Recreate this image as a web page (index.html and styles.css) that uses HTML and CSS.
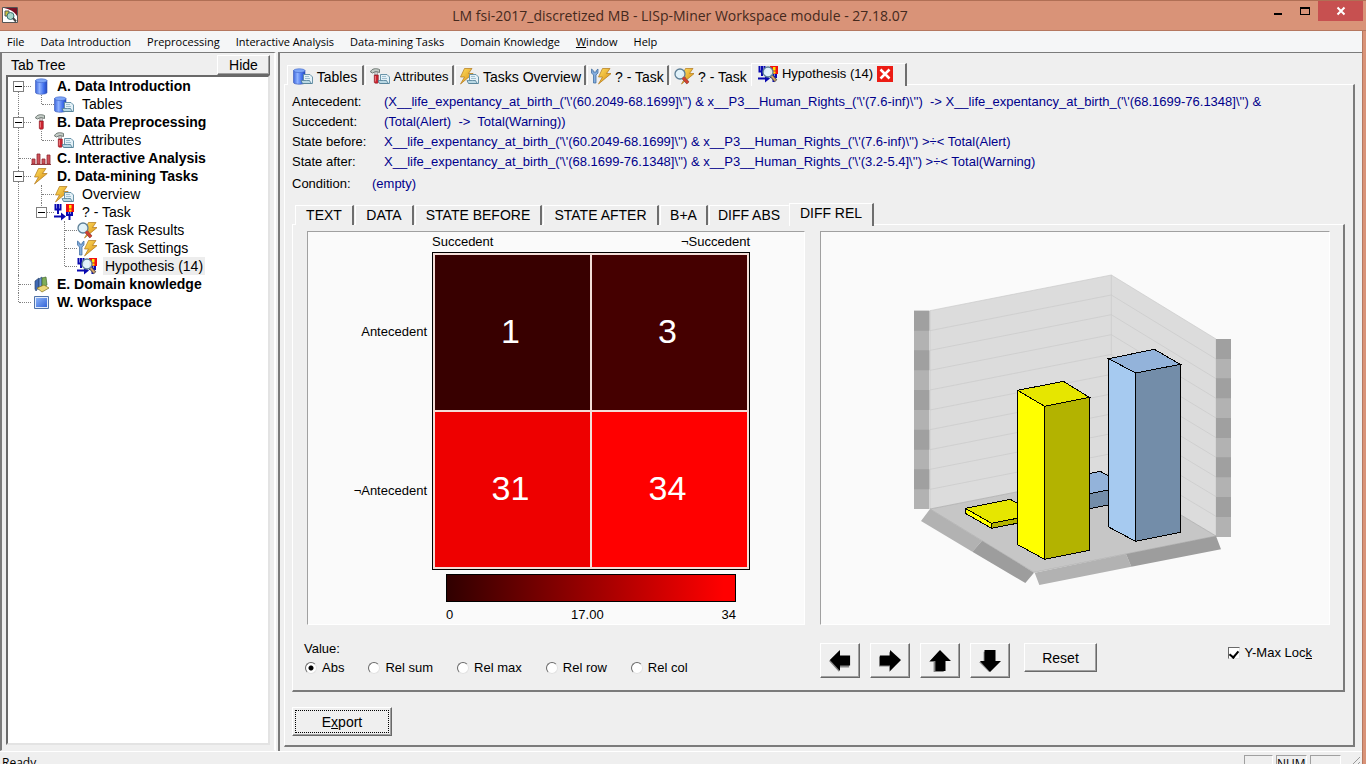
FILE: index.html
```html
<!DOCTYPE html>
<html lang="en">
<head>
<meta charset="utf-8">
<title>LM fsi-2017_discretized MB - LISp-Miner Workspace module - 27.18.07</title>
<link rel="stylesheet" href="styles.css">
</head>
<body>
<svg class="defs" aria-hidden="true">
  <defs>
    <linearGradient id="blue"><stop offset="0" stop-color="#3d66dd"/><stop offset=".35" stop-color="#8fb2ff"/><stop offset=".7" stop-color="#4472ee"/><stop offset="1" stop-color="#2348bd"/></linearGradient>
    <linearGradient id="screen" x2="1" y2="1"><stop offset="0" stop-color="#8ab2f8"/><stop offset="1" stop-color="#3566d8"/></linearGradient>
    <linearGradient id="gold" x2="1" y2="1"><stop offset="0" stop-color="#ffe060"/><stop offset="1" stop-color="#d5870c"/></linearGradient>
    <g id="g-db"><path d="M.5 2.500v12c0 2.300 11.500 2.300 11.500 0v-12z" fill="url(#blue)" stroke="#3556b5" stroke-width=".6"/><ellipse cx="6.300" cy="2.700" rx="5.700" ry="1.900" fill="#7ea6f7" stroke="#3a62c8" stroke-width=".6"/></g>
    <g id="g-sheet"><path d="M10.500 6.500h6.500l2.500 2.500v6.500h-9z" fill="#e4f1f8" stroke="#5c8aa0" stroke-width=".9"/><path d="M8 12.500c0 0 8 0 8.500 0 .5 1 1 2 2 3H9.500z" fill="#b9d8e4" stroke="#4a7890" stroke-width=".8"/><path d="M12 8.500h4M12 10.500h5" stroke="#8db3c4" stroke-width=".8"/></g>
    <g id="g-hammer"><path d="M.5 4C1.500.5 6 0 9.500 1.500V4.500L7 3.800H5L2.500 5z" fill="#c5cdc8" stroke="#56625c" stroke-width=".8"/><path d="M4.800 4h2.600v3H4.800z" fill="#ddd" stroke="#666" stroke-width=".5"/><path d="M4.300 7h4v7.500c0 1-4 1-4 0z" fill="#cc2430" stroke="#861520" stroke-width=".6"/><path d="M5.500 8v5.500" stroke="#f08a8a" stroke-width=".8"/></g>
    <g id="g-bolt"><path d="M5.500.500H13L9.500 5.500h4.700L1.500 16 5.500 9H1.500z" fill="url(#gold)" stroke="#b07718" stroke-width=".7"/></g>
    <g id="g-lens"><path d="m9 9.500 5 5.500" stroke="#555" stroke-width="3.400"/><path d="m9.500 10 4 4.500" stroke="#e0a468" stroke-width="1.800"/><circle cx="6" cy="6" r="5" fill="#dff1fa" fill-opacity=".95" stroke="#5d7f96" stroke-width="1.300"/></g>
    <g id="g-task"><path d="M1.500 0v5.500h5V0M4 0v10M13 7v4h5V7M15.500 7v9M0 12.500h9" fill="none" stroke="#0808b0" stroke-width="2"/><path d="m7 8.500 5 4-5 4z" fill="#0808b0"/><path d="M12 0h8v8h-8z" fill="#f01010"/><path d="M15 1h2.500v3.500H15zM15 5.500h2.500v2H15z" fill="#ffe800"/></g>
    <symbol id="db" viewBox="0 0 20 17"><use href="#g-db" x="4"/></symbol>
    <symbol id="tables" viewBox="0 0 20 17"><use href="#g-db"/><use href="#g-sheet"/></symbol>
    <symbol id="hammer" viewBox="0 0 20 17"><use href="#g-hammer" x="4"/></symbol>
    <symbol id="attributes" viewBox="0 0 20 17"><use href="#g-hammer"/><use href="#g-sheet"/></symbol>
    <symbol id="bars" viewBox="0 0 20 17"><path d="M1 9h3v5H1zM6 4h3v10H6zM11 9h3v5h-3zM16 5h3v9h-3z" fill="#d0525a" stroke="#8e2830" stroke-width=".8"/><path d="M0 14.500h20" stroke="#8e3a40"/></symbol>
    <symbol id="bolt" viewBox="0 0 20 17"><use href="#g-bolt" x="2"/></symbol>
    <symbol id="overview" viewBox="0 0 20 17"><use href="#g-bolt"/><use href="#g-sheet"/></symbol>
    <symbol id="task" viewBox="0 0 20 17"><use href="#g-task"/></symbol>
    <symbol id="results" viewBox="0 0 20 17"><use href="#g-bolt" x="6"/><use href="#g-lens"/><path d="m9 9.500 5 5.500" stroke="#d04030" stroke-width="3"/></symbol>
    <symbol id="settings" viewBox="0 0 20 17"><path d="M.5 1v4l2 2v8H5V7l2-2V1L5.300 2.500v1.500H2.300V2.500z" fill="#86aede" stroke="#34659c" stroke-width=".7"/><use href="#g-bolt" x="6"/></symbol>
    <symbol id="hypothesis" viewBox="0 0 20 17"><use href="#g-task"/><use href="#g-lens" x="4"/></symbol>
    <symbol id="domain" viewBox="0 0 20 17"><path d="M4 5 8 2v9l-3 4-1-2z" fill="#3f68b4" stroke="#2c4870" stroke-width=".7"/><path d="m8 3 3-2v9l-3 4z" fill="#6b96d8" stroke="#2c4870" stroke-width=".7"/><path d="m11 2 4-1 1 8-5 3z" fill="#7fae58" stroke="#44682c" stroke-width=".7"/><path d="m6 12 7-3 5 3-7 4z" fill="#ecd878" stroke="#80701c" stroke-width=".7"/></symbol>
    <symbol id="workspace" viewBox="0 0 20 17"><path d="M3.500 2.500h14v12h-14z" fill="#e4edfb" stroke="#5274a8"/><path d="M5 4h11v9H5z" fill="url(#screen)"/></symbol>
  </defs>
</svg>

<div class="window">
  <header class="titlebar">
    <svg class="app-icon" viewBox="0 0 16 16"><path fill="#fff" stroke="#555" d="M.5.500h15v15H.5z"/><path d="M2 1h13v8C12 4 7 2 2 1z" fill="#7a1024"/><path d="M3 4h4v5H3z" fill="#c9c440" stroke="#555"/><circle cx="8.500" cy="9" r="3.500" fill="#a7d6c9" stroke="#376f70"/><path d="m11 11 3 3.500" stroke="#444" stroke-width="2"/></svg>
    <h1>LM fsi-2017_discretized MB - LISp-Miner Workspace module - 27.18.07</h1>
    <div class="window-buttons">
      <button type="button" aria-label="Minimize"><svg viewBox="0 0 10 10"><path d="M1 7h8v2H1z"/></svg></button>
      <button type="button" aria-label="Maximize"><svg viewBox="0 0 10 10"><path d="M0 1h10v8H0zM1 3v5h8V3z" fill-rule="evenodd"/></svg></button>
      <button type="button" class="close" aria-label="Close"><svg viewBox="0 0 10 10"><path d="m1.500 1.500 7 7m0-7-7 7" stroke="#fff" stroke-width="2"/></svg></button>
    </div>
  </header>

  <div class="frame">
    <nav class="menubar">
      <button type="button">File</button><button type="button">Data Introduction</button><button type="button">Preprocessing</button><button type="button">Interactive Analysis</button><button type="button">Data-mining Tasks</button><button type="button">Domain Knowledge</button><button type="button"><u>W</u>indow</button><button type="button">Help</button>
    </nav>

    <div class="workarea">
      <aside class="sidebar">
        <div class="sidebar-head"><h2>Tab Tree</h2><button type="button" class="btn">Hide</button></div>
        <ul class="tree">
          <li><div class="row top"><button type="button" class="toggle" aria-label="Collapse"></button><svg class="icon"><use href="#db"/></svg><span>A. Data Introduction</span></div>
            <ul><li><div class="row"><svg class="icon"><use href="#tables"/></svg><span>Tables</span></div></li></ul></li>
          <li><div class="row top"><button type="button" class="toggle" aria-label="Collapse"></button><svg class="icon"><use href="#hammer"/></svg><span>B. Data Preprocessing</span></div>
            <ul><li><div class="row"><svg class="icon"><use href="#attributes"/></svg><span>Attributes</span></div></li></ul></li>
          <li><div class="row top"><svg class="icon"><use href="#bars"/></svg><span>C. Interactive Analysis</span></div></li>
          <li><div class="row top"><button type="button" class="toggle" aria-label="Collapse"></button><svg class="icon"><use href="#bolt"/></svg><span>D. Data-mining Tasks</span></div>
            <ul>
              <li><div class="row"><svg class="icon"><use href="#overview"/></svg><span>Overview</span></div></li>
              <li><div class="row"><button type="button" class="toggle" aria-label="Collapse"></button><svg class="icon"><use href="#task"/></svg><span>? - Task</span></div>
                <ul>
                  <li><div class="row"><svg class="icon"><use href="#results"/></svg><span>Task Results</span></div></li>
                  <li><div class="row"><svg class="icon"><use href="#settings"/></svg><span>Task Settings</span></div></li>
                  <li><div class="row selected"><svg class="icon"><use href="#hypothesis"/></svg><span>Hypothesis (14)</span></div></li>
                </ul></li>
            </ul></li>
          <li><div class="row top"><svg class="icon"><use href="#domain"/></svg><span>E. Domain knowledge</span></div></li>
          <li><div class="row top"><svg class="icon"><use href="#workspace"/></svg><span>W. Workspace</span></div></li>
        </ul>
      </aside>

      <main class="content">
        <div class="tabs main-tabs" role="tablist">
          <button type="button" class="tab" role="tab"><svg class="icon"><use href="#tables"/></svg>Tables</button>
          <button type="button" class="tab" role="tab"><svg class="icon"><use href="#attributes"/></svg>Attributes</button>
          <button type="button" class="tab" role="tab"><svg class="icon"><use href="#overview"/></svg>Tasks Overview</button>
          <button type="button" class="tab" role="tab"><svg class="icon"><use href="#settings"/></svg>? - Task</button>
          <button type="button" class="tab" role="tab"><svg class="icon"><use href="#results"/></svg>? - Task</button>
          <button type="button" class="tab active" role="tab" aria-selected="true"><svg class="icon"><use href="#hypothesis"/></svg>Hypothesis (14)<svg class="tab-close" viewBox="0 0 16 16"><path d="M0 0h16v16H0z" fill="#ec1c14"/><path d="m3.500 3.500 9 9m0-9-9 9" stroke="#fff" stroke-width="2.500"/></svg></button>
        </div>

        <section class="page">
          <dl class="facts">
            <div><dt>Antecedent:</dt><dd>(X__life_expentancy_at_birth_('\'(60.2049-68.1699]\'') &amp; x__P3__Human_Rights_('\'(7.6-inf)\'')&nbsp; -&gt; X__life_expentancy_at_birth_('\'(68.1699-76.1348]\'') &amp;</dd></div>
            <div><dt>Succedent:</dt><dd>(Total(Alert)&nbsp; -&gt;&nbsp; Total(Warning))</dd></div>
            <div><dt>State before:</dt><dd>X__life_expentancy_at_birth_('\'(60.2049-68.1699]\'') &amp; x__P3__Human_Rights_('\'(7.6-inf)\'') &gt;÷&lt; Total(Alert)</dd></div>
            <div><dt>State after:</dt><dd>X__life_expentancy_at_birth_('\'(68.1699-76.1348]\'') &amp; x__P3__Human_Rights_('\'(3.2-5.4]\'') &gt;÷&lt; Total(Warning)</dd></div>
            <div class="condition"><dt>Condition:</dt><dd>(empty)</dd></div>
          </dl>

          <div class="tabs sub-tabs" role="tablist">
            <button type="button" class="tab" role="tab">TEXT</button>
            <button type="button" class="tab" role="tab">DATA</button>
            <button type="button" class="tab" role="tab">STATE BEFORE</button>
            <button type="button" class="tab" role="tab">STATE AFTER</button>
            <button type="button" class="tab" role="tab">B+A</button>
            <button type="button" class="tab" role="tab">DIFF ABS</button>
            <button type="button" class="tab active" role="tab" aria-selected="true">DIFF REL</button>
          </div>

          <div class="subpage">
            <div class="pane">
              <div class="canvas heat">
                <table class="matrix">
                  <thead><tr><td></td><th scope="col">Succedent</th><th scope="col" class="end">¬Succedent</th></tr></thead>
                  <tbody>
                    <tr><th scope="row">Antecedent</th><td><div class="cell v1">1</div></td><td><div class="cell v3">3</div></td></tr>
                    <tr><th scope="row">¬Antecedent</th><td><div class="cell v31">31</div></td><td><div class="cell v34">34</div></td></tr>
                  </tbody>
                </table>
                <div class="legend"><div class="ramp"></div><div class="scale"><span>0</span><span>17.00</span><span>34</span></div></div>
              </div>
              <fieldset class="values">
                <legend>Value:</legend>
                <div class="choices">
                  <label><input type="radio" name="value" checked>Abs</label>
                  <label><input type="radio" name="value">Rel sum</label>
                  <label><input type="radio" name="value">Rel max</label>
                  <label><input type="radio" name="value">Rel row</label>
                  <label><input type="radio" name="value">Rel col</label>
                </div>
              </fieldset>
            </div>

            <div class="pane">
              <div class="canvas plot">
                <svg class="chart" viewBox="0 0 1050 1020" role="img" aria-label="3D bar chart">
                  <path d="M90 152 634 45 948 237V828L634 640 90 747z" fill="#dcdcdc"/>
                  <path d="M90 747 634 640 948 828 402 937z" fill="#c6c6c6"/>
                  <g fill="none" stroke="#c9c9c9" stroke-width="2">
                    <path d="M90 152 634 45 948 237M634 45V640M90 152V747M948 237V828"/>
                    <path d="M90 212 634 105 948 297M90 271 634 164 948 356M90 331 634 224 948 415M90 390 634 283 948 474M90 450 634 343 948 533M90 509 634 402 948 592M90 569 634 462 948 651M90 628 634 521 948 710M90 688 634 581 948 769"/>
                    <path d="M90 747 634 640 948 828 402 937z" stroke="#a8a8a8"/>
                  </g>
                  <path d="M42 152h46v595H42zM948 237h45v594h-45z" fill="#b2b2b2"/>
                  <path d="M42 152h46v60H42zM42 271h46v60H42zM42 390h46v60H42zM42 509h46v60H42zM42 628h46v60H42zM948 237h45v60h-45zM948 355h45v60h-45zM948 474h45v60h-45zM948 592h45v60h-45zM948 711h45v60h-45z" fill="#a0a0a0"/>
                  <path d="M90 747 246 842 217 875 63 783zM404 938 678 882 694 920 418 975z" fill="#b2b2b2"/>
                  <path d="M246 842 402 938 376 969 217 875zM678 882 948 828 963 868 694 920z" fill="#9d9d9d"/>
                  <g stroke="#000" stroke-width="3" shape-rendering="crispEdges">
                    <path d="M466 662 601 634 682 679 547 705z" fill="#93b3da"/><path d="M547 705 682 679V724L547 750z" fill="#738da9"/>
                    <path d="M196 745 331 718 411 763 275 790z" fill="#e6e600"/><path d="M196 745 275 790V805L196 760z" fill="#ff0"/><path d="M275 790 411 763V778L275 805z" fill="#b3b300"/>
                    <path d="M626 296 763 268 841 313 707 339z" fill="#93b3da"/><path d="M626 296 707 339V844L626 801z" fill="#a6caf0"/><path d="M707 339 841 313V817L707 844z" fill="#738da9"/>
                    <path d="M353 391 490 364 568 412 434 439z" fill="#e6e600"/><path d="M353 391 434 439V898L353 854z" fill="#ff0"/><path d="M434 439 568 412V871L434 898z" fill="#b3b300"/>
                  </g>
                </svg>
              </div>
              <div class="plot-controls">
                <button type="button" class="btn arrow" aria-label="Rotate left"><svg viewBox="0 0 24 24"><path d="M0 12 11 1v6h11v12H11v5z" fill="#858585"/><path d="M1 11 12 0v6h11v11H12v6z"/></svg></button>
                <button type="button" class="btn arrow" aria-label="Rotate right"><svg viewBox="0 0 24 24"><path d="M0 7h11V2l11 10-11 12v-6H0z" fill="#858585"/><path d="M1 6h11V0l12 11-12 12v-6H1z"/></svg></button>
                <button type="button" class="btn arrow" aria-label="Rotate up"><svg viewBox="0 0 24 24"><path d="M0 13 11 1l11 11h-6v12H5V13z" fill="#858585"/><path d="M1 12 12 0l12 12h-6v11H7V12z"/></svg></button>
                <button type="button" class="btn arrow" aria-label="Rotate down"><svg viewBox="0 0 24 24"><path d="M5 2h11v10h6L11 24 0 13h5z" fill="#858585"/><path d="M6 0h12v12h6L12 24 1 12h5z"/></svg></button>
                <button type="button" class="btn reset">Reset</button>
                <label class="lock"><input type="checkbox" checked><span>Y-Max Loc<u>k</u></span></label>
              </div>
            </div>
          </div>

          <button type="button" class="btn export">E<u>x</u>port</button>
        </section>
      </main>
    </div>

    <footer class="statusbar"><span>Ready</span><span class="slot"></span><span class="slot">NUM</span><span class="slot"></span><svg class="grip" viewBox="0 0 14 14"><path d="M2 14 14 2M7 14l7-7" stroke="#999"/></svg></footer>
  </div>
</div>
</body>
</html>
```
FILE: styles.css
```css
* { box-sizing: border-box; }

body {
  margin: 0;
  font: 13px/18px "Liberation Sans", Arial, sans-serif;
  color: #000;
  background: #efefef;
}

button { font: inherit; color: inherit; padding: 0; }
h1, h2, ul, dl, dd, fieldset { margin: 0; padding: 0; font-weight: normal; }
.defs { display: block; width: 0; height: 0; position: absolute; }
.icon { width: 20px; height: 17px; flex: none; }

.window { display: flex; flex-direction: column; height: 100vh; overflow: hidden; background: #d99378; }

/* Title bar */
.titlebar {
  display: grid;
  grid-template-columns: 120px 1fr 126px;
  height: 31px;
  border-top: 1px solid #b06f55;
  border-bottom: 1px solid #b57860;
}
.app-icon { width: 16px; height: 16px; margin: 6px 0 0 2px; }
.titlebar h1 {
  font: 14px/29px "Open Sans", sans-serif;
  color: #45291d;
  text-align: center;
  white-space: nowrap;
}
.window-buttons { display: flex; justify-content: flex-end; padding-right: 3px; }
.window-buttons button { width: 27px; height: 20px; border: 0; background: none; }
.window-buttons svg { width: 10px; height: 10px; display: block; margin: 5px auto; }
.window-buttons .close { width: 45px; background: #c75050; }

.frame {
  flex: 1;
  min-height: 0;
  display: flex;
  flex-direction: column;
  margin-right: 3px;
  background: #efefef;
  border-right: 1px solid #b57860;
}

.menubar {
  display: flex;
  gap: 16px;
  padding-left: 7px;
  height: 21px;
  flex: none;
  background: #f5f6f7;
}
.menubar button {
  border: 0;
  background: none;
  font: 11px/20px "Open Sans", sans-serif;
  white-space: nowrap;
}

.workarea {
  flex: 1;
  min-height: 0;
  display: grid;
  grid-template-columns: 278px 1fr;
  border-bottom: 1px solid #fff;
}

/* Classic raised button */
.btn {
  border: 1px solid;
  border-color: #fff #696969 #696969 #fff;
  box-shadow: inset -1px -1px #a0a0a0;
  background: #efefef;
}

/* Sidebar */
.sidebar {
  display: flex;
  flex-direction: column;
  margin-right: 2px;
  padding: 2px 4px 5px 4px;
  border: solid;
  border-width: 1px 2px 1px 2px;
  border-color: #7b7b7b #fff #efefef #7b7b7b;
}
.sidebar-head { display: flex; justify-content: space-between; padding-left: 5px; height: 20px; }
.sidebar-head h2 { font-size: 14px; line-height: 20px; }
.sidebar-head .btn { width: 53px; height: 20px; font-size: 14px; line-height: 16px; }

.tree {
  flex: 1;
  list-style: none;
  background: #fff;
  border: 2px solid;
  border-color: #696969 #e3e3e3 #e3e3e3 #696969;
}
.tree ul { list-style: none; margin-left: 23px; }
.tree li { position: relative; }
.tree li::before {
  content: "";
  position: absolute;
  left: 10px;
  top: 0;
  bottom: 0;
  border-left: 1px dotted #808080;
}
.tree > li:first-child::before { top: 9px; }
.tree li:last-child::before { bottom: auto; height: 9px; }
.row {
  position: relative;
  display: flex;
  align-items: center;
  gap: 6px;
  height: 18px;
  padding-left: 23px;
  font-size: 14px;
  white-space: nowrap;
}
.row::before {
  content: "";
  position: absolute;
  left: 11px;
  top: 9px;
  width: 12px;
  border-top: 1px dotted #808080;
}
.row span { padding: 0 2px; }
.row.top { font-weight: bold; gap: 4px; }
.row.selected span { background: #ededed; }
.toggle {
  position: absolute;
  left: 5px;
  top: 4px;
  width: 11px;
  height: 11px;
  border: 1px solid #808080;
  background: linear-gradient(#000, #000) center / 7px 1px no-repeat #fff;
}

/* Main area */
.content {
  display: flex;
  flex-direction: column;
  min-width: 0;
  padding: 10px 7px 4px 4px;
  border-top: 1px solid #7b7b7b;
  border-left: 2px solid #7b7b7b;
}

.tabs { display: flex; align-items: flex-end; height: 22px; margin-bottom: -1px; position: relative; }
.tab {
  display: flex;
  align-items: center;
  justify-content: center;
  gap: 4px;
  height: 20px;
  border: solid;
  border-width: 1px 2px 0 1px;
  border-color: #fff #6e6e6e #fff #fff;
  background: #efefef;
  white-space: nowrap;
}
.tab:has(+ .active) { border-right-color: #efefef; }
.tab.active { height: 23px; margin-bottom: -1px; }

.main-tabs { padding-left: 3px; gap: 1px; }
.main-tabs .tab { min-width: 77px; padding-top: 2px; }
.main-tabs .tab:nth-child(2) { min-width: 89px; }
.main-tabs .tab:nth-child(3) { min-width: 131px; font-size: 14px; }
.main-tabs .tab:nth-child(4), .main-tabs .tab:nth-child(5) { min-width: 82px; font-size: 14px; }
.main-tabs .tab:first-child { font-size: 14px; }
.main-tabs .tab.active { min-width: 156px; padding: 0 6px 2px 0; margin-left: -2px; }
.tab-close { width: 16px; height: 16px; }

.page {
  flex: 1;
  display: flex;
  flex-direction: column;
  padding: 7px 8px 9px 7px;
  border: solid;
  border-width: 1px 2px 2px 1px;
  border-color: #fff #7b7b7b #7b7b7b #fff;
}

.facts > div { display: flex; height: 20px; line-height: 20px; white-space: nowrap; }
.facts dt { width: 92px; }
.facts dd { color: #00008b; }
.facts .condition { height: 31px; line-height: 24px; }
.facts .condition dt { width: 80px; }

.sub-tabs { padding-left: 3px; gap: 1px; font-size: 14px; }
.sub-tabs .tab { min-width: 59px; padding-bottom: 2px; }
.sub-tabs .tab:nth-child(3) { min-width: 127px; }
.sub-tabs .tab:nth-child(4) { min-width: 116px; }
.sub-tabs .tab:nth-child(5) { min-width: 48px; }
.sub-tabs .tab:nth-child(6) { min-width: 81px; }
.sub-tabs .tab.active { min-width: 85px; padding-bottom: 5px; margin-left: -2px; }

.subpage {
  flex: 1;
  display: grid;
  grid-template-columns: 498fr 510fr;
  gap: 15px;
  padding: 6px 13px 0 14px;
  border: solid;
  border-width: 1px 2px 2px 1px;
  border-color: #fff #7b7b7b #7b7b7b #fff;
}
.pane { display: flex; flex-direction: column; min-width: 0; }
.canvas {
  height: 394px;
  background: #fafafa;
  border: 1px solid;
  border-color: #a0a0a0 #fff #fff #a0a0a0;
}

/* Contingency table */
.matrix { border-collapse: separate; border-spacing: 0; }
.matrix td, .matrix th { padding: 0; font-weight: normal; }
.matrix thead th { height: 20px; text-align: left; }
.matrix thead th.end { text-align: right; }
.matrix tbody th { width: 124px; padding-right: 5px; text-align: right; }
.matrix tbody td {
  width: 159px;
  background: #f3ded8;
  border: 0 solid #000;
  padding: 1px;
}
.matrix tbody td:nth-child(2) { border-left-width: 1px; padding-left: 2px; }
.matrix tbody td:nth-child(3) { border-right-width: 1px; padding-right: 2px; }
.matrix tbody tr:first-child td { border-top-width: 1px; padding-top: 2px; }
.matrix tbody tr:last-child td { border-bottom-width: 1px; padding-bottom: 2px; }
.cell {
  display: flex;
  align-items: center;
  justify-content: center;
  height: 155px;
  padding: 0 4px 4px 0;
  font-size: 34px;
  color: #fff;
}
.v1 { background: #380000; }
.v3 { background: #450000; }
.v31 { background: #ee0000; }
.v34 { background: #ff0000; }

.legend { width: 290px; margin: 4px 0 0 138px; }
.ramp { height: 28px; border: 1px solid #000; background: linear-gradient(90deg, #300000, #ff0000 96%); }
.scale { display: flex; justify-content: space-between; line-height: 25px; }

/* Value options */
.values { border: 0; padding-top: 15px; }
.values legend { padding: 0; float: left; width: 100%; margin-left: -3px; line-height: 18px; }
.choices { display: flex; gap: 24px; clear: both; margin-left: -2px; }
.choices label { display: flex; align-items: center; gap: 5px; height: 20px; }

input { appearance: none; margin: 0; flex: none; background: #fff; }
input[type="radio"] {
  width: 12px;
  height: 12px;
  border: 1px solid;
  border-color: #696969 #e3e3e3 #e3e3e3 #696969;
  border-radius: 50%;
}
input[type="radio"]:checked { background: radial-gradient(circle, #000 2px, #fff 3px); }
input[type="checkbox"] {
  width: 12px;
  height: 12px;
  border: 1px solid;
  border-color: #696969 #e3e3e3 #e3e3e3 #696969;
  display: grid;
  place-items: center;
}
input[type="checkbox"]:checked::before {
  content: "";
  width: 4px;
  height: 7px;
  border: solid #000;
  border-width: 0 2px 2px 0;
  rotate: 40deg;
}

/* 3D chart */
.chart { display: block; width: 350px; height: 340px; margin: 28px 0 0 79px; }
.plot-controls { display: flex; align-items: flex-start; gap: 10px; padding-top: 18px; }
.arrow { width: 40px; height: 35px; }
.arrow svg { display: block; width: 22px; height: 22px; margin: auto; }
.reset { width: 73px; height: 29px; margin-left: 4px; font-size: 14px; }
.lock { display: flex; align-items: center; gap: 5px; height: 20px; margin: 0 18px 0 auto; }

.export {
  width: 100px;
  height: 29px;
  margin-top: 15px;
  font-size: 14px;
  outline: 1px dotted #000;
  outline-offset: -4px;
}

.statusbar {
  display: flex;
  flex: none;
  gap: 3px;
  height: 12px;
  padding: 3px 0 0 2px;
  overflow: hidden;
  font: 12px/16px "Open Sans", sans-serif;
}
.statusbar span:first-child { flex: 1; }
.slot { width: 29px; height: 18px; border: 1px solid; border-color: #a0a0a0 #fff #fff #a0a0a0; }
.slot:nth-child(3), .slot:nth-child(4) { width: 31px; }
.grip { width: 18px; height: 14px; }
```
